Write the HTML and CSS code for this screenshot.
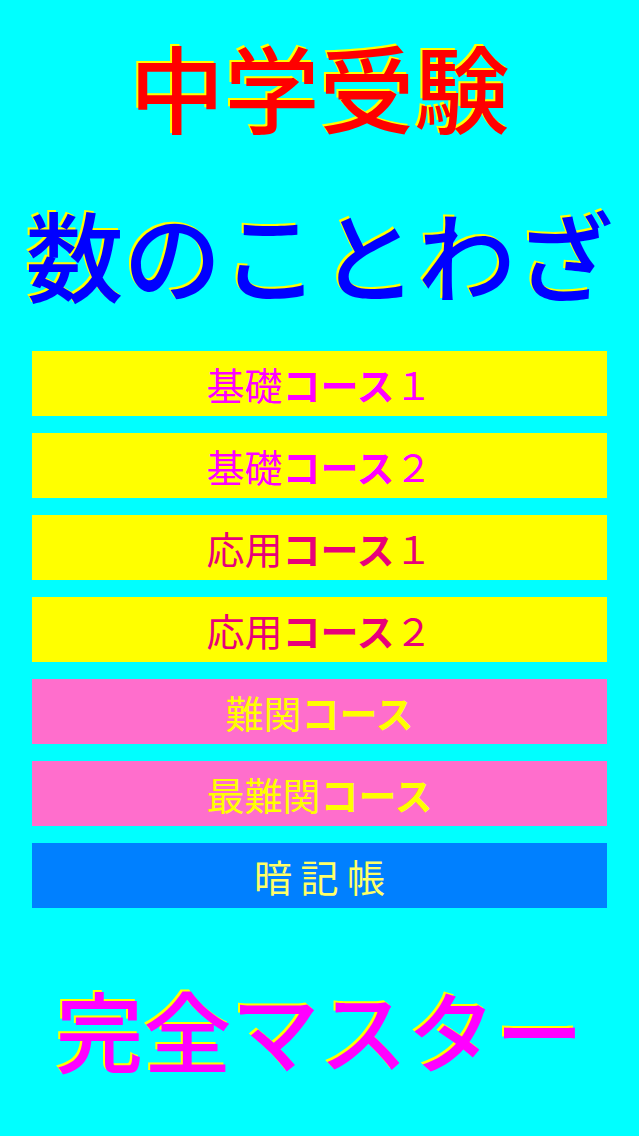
FILE: index.html
```html
<!DOCTYPE html>
<html lang="ja">
<head>
<meta charset="utf-8">
<link rel="stylesheet" href="styles.css">
</head>
<body>
<div class="page">
  <h1 class="title title-red">中学受験</h1>
  <h1 class="title title-blue">数のことわざ</h1>
  <div class="menu">
    <div class="btn btn-yellow magenta">基礎<span class="kana">コース</span>１</div>
    <div class="btn btn-yellow magenta">基礎<span class="kana">コース</span>２</div>
    <div class="btn btn-yellow crimson">応用<span class="kana">コース</span>１</div>
    <div class="btn btn-yellow crimson">応用<span class="kana">コース</span>２</div>
    <div class="btn btn-pink">難関<span class="kana">コース</span></div>
    <div class="btn btn-pink">最難関<span class="kana">コース</span></div>
    <div class="btn btn-blue">暗 記 帳</div>
  </div>
  <h1 class="title title-magenta">完全マスター</h1>
</div>
</body>
</html>
```
FILE: styles.css
```css
html, body {
  margin: 0;
  padding: 0;
  background: #00ffff;
}
.page {
  width: 639px;
  height: 1136px;
  display: flex;
  flex-direction: column;
  align-items: center;
  font-family: "Noto Sans CJK JP", "Noto Sans", sans-serif;
}
.title {
  margin: 0;
  font-weight: 500;
  line-height: 1;
  text-align: center;
  white-space: nowrap;
  text-shadow: -2px -2px 0 #ffff00;
}
.title-red {
  color: #ff0000;
  font-size: 95px;
  margin-top: 38px;
}
.title-blue {
  color: #0000ff;
  font-size: 98px;
  margin-top: 70px;
}
.title-magenta {
  color: #ff00ff;
  font-size: 88px;
  margin-top: 76px;
}
.menu {
  margin-top: 50px;
  width: 575px;
  display: flex;
  flex-direction: column;
  gap: 17px;
}
.btn {
  height: 65px;
  display: flex;
  align-items: center;
  justify-content: center;
  font-size: 38px;
  font-weight: 400;
  white-space: pre;
}
.kana {
  font-weight: 600;
}
.btn-yellow { background: #ffff00; }
.magenta { color: #ff00ff; }
.crimson { color: #e8007a; }
.btn-pink { background: #ff6ecc; color: #ffff00; }
.btn-blue { background: #0080ff; color: #ffff66; }
```
